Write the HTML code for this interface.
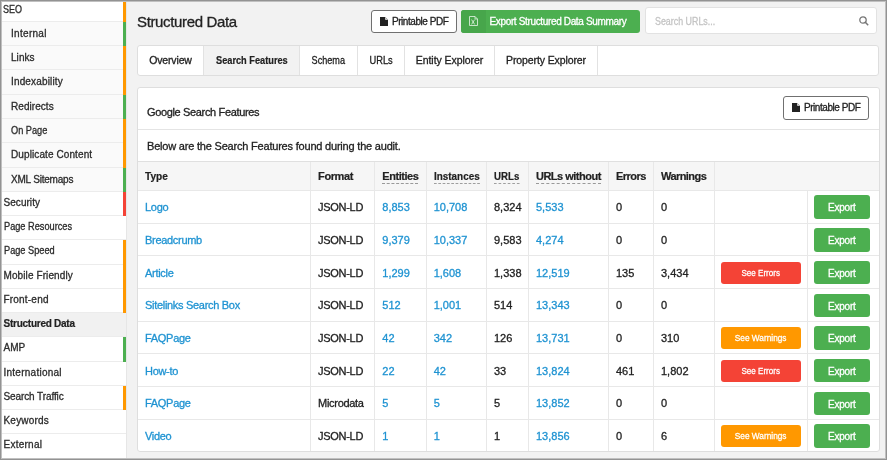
<!DOCTYPE html>
<html><head><meta charset="utf-8">
<style>
*{box-sizing:border-box;margin:0;padding:0}
html,body{width:887px;height:460px;overflow:hidden}
.side,.title,.btn-pdf,.btn-exp,.search,.tabs,.card{will-change:transform}
body{font-family:"Liberation Sans",sans-serif;background:#f2f2f2;position:relative;color:#222;-webkit-text-stroke:0.3px}
i{font-style:normal}
.sx{display:inline-block;transform-origin:50% 50%}
.frame{position:absolute;left:0;top:0;width:887px;height:460px;border:1px solid #939393;box-shadow:inset 0 0 0 1px #c0c0c0;pointer-events:none;z-index:50}
.side{position:absolute;left:0;top:0;width:127px;height:460px;background:#fff;overflow:hidden;border-right:1px solid #e6e6e6}
.si{position:absolute;left:0;width:126px;height:24.26px;border-bottom:1px solid #ececec;font-size:10px;line-height:22.5px;padding-left:3.5px;color:#2c2c2c;white-space:nowrap}
.si.sub{padding-left:11px;background:#fafafa;line-height:24.5px}
.si.act{background:#f1f1f1;font-weight:bold;color:#222;-webkit-text-stroke:0.2px}
.bar{position:absolute;left:123px;top:0;width:3px;height:24.26px}
.o{background:#ff9800}.g{background:#4caf50}.r{background:#f44336}
.title{position:absolute;left:137px;top:13px;font-size:15px;letter-spacing:-0.35px;color:#222;white-space:nowrap}
.btn-pdf{position:absolute;left:371px;top:10px;width:86px;height:23px;border:1px solid #707070;border-radius:3px;background:#fff;font-size:10px;letter-spacing:-0.45px;color:#222;line-height:21px;white-space:nowrap}
.btn-pdf .ic{position:absolute;left:8px;top:6px}
.btn-pdf span{position:absolute;left:20px;top:0}
.btn-exp{position:absolute;left:460.5px;top:10px;width:179px;height:23px;border-radius:3px;background:#4caf50;color:#fff;font-size:10px;letter-spacing:-0.35px;line-height:23px;white-space:nowrap;overflow:hidden}
.btn-exp .isec{position:absolute;left:0;top:0;width:24.5px;height:23px;background:#47a64b}
.btn-exp .ic{position:absolute;left:8px;top:6px}
.btn-exp span{position:absolute;left:28.5px;top:0}
.search{position:absolute;left:645px;top:7px;width:232px;height:27px;border:1px solid #e2e2e2;border-radius:3px;background:#fff}
.search span{position:absolute;left:9px;top:0.5px;line-height:24px;font-size:10.5px;color:#c4c4c4;letter-spacing:0;white-space:nowrap}
.search svg{position:absolute;left:213px;top:7.5px}
.tabs{position:absolute;left:137px;top:45px;width:742px;height:31px;border:1px solid #dedede;border-radius:3px;background:#fff;overflow:hidden}
.tab{position:absolute;top:0;height:29px;line-height:28px;font-size:10.5px;color:#222;border-right:1px solid #e2e2e2;text-align:center;white-space:nowrap}
.tab.act{background:#f2f2f2;font-weight:bold;-webkit-text-stroke:0.2px}
.card{position:absolute;left:137px;top:87px;width:743px;height:365px;border:1px solid #dedede;border-radius:3px;background:#fff;overflow:hidden}
.chead{position:absolute;left:0;top:0;width:100%;height:42px;border-bottom:1px solid #e4e4e4}
.chead .t{position:absolute;left:9px;top:18px;font-size:11px;letter-spacing:-0.35px;color:#222;white-space:nowrap}
.btn-pdf2{position:absolute;left:645px;top:8px;width:86px;height:24px;border:1px solid #707070;border-radius:3px;background:#fff;font-size:10px;letter-spacing:-0.45px;color:#222;line-height:22px;white-space:nowrap}
.btn-pdf2 .ic{position:absolute;left:8px;top:6px}
.btn-pdf2 span{position:absolute;left:20px;top:0}
.cdesc{position:absolute;left:0;top:42px;width:100%;height:32px;border-bottom:1px solid #e0e0e0}
.cdesc .t{position:absolute;left:9px;top:9.5px;font-size:11px;letter-spacing:-0.2px;color:#222;white-space:nowrap}
table{position:absolute;left:0;top:74px;border-collapse:collapse;table-layout:fixed;width:742px}
td,th{border-right:1px solid #e8e8e8;border-bottom:1px solid #e8e8e8;padding:0 0 0 7px;text-align:left;white-space:nowrap;font-size:11px;overflow:hidden}
th{height:28.4px;background:#f6f6f6;font-weight:bold;-webkit-text-stroke:0.2px;color:#222;letter-spacing:-0.5px}
td{height:32.7px;color:#222;padding-top:1px}
td:last-child,th:last-child{border-right:none}
th u{text-decoration:none;border-bottom:1px dashed #999;padding-bottom:1px}
td.l{color:#1f93d2}
td.ty{letter-spacing:-0.3px}
td.ac,td.ex{padding-left:6px}
.b{display:inline-block;height:22px;line-height:22px;border-radius:3px;color:#fff;font-size:9.5px;text-align:center;vertical-align:middle}
.be{background:#f44336;width:80px}
.bw{background:#ff9800;width:80px}
.bx{background:#4caf50;width:56px;height:23.5px;line-height:25px;font-size:10px;letter-spacing:-0.2px}
</style></head>
<body>
<div class="side">
<div class="si" style="top:-2.3px;line-height:24px;padding-left:3px"><i class="sx" style="transform:scaleX(0.9);transform-origin:0 50%">SEO</i><div class="bar o"></div></div>
<div class="si sub" style="top:21.96px"><span style="letter-spacing:0.3px">Internal</span><div class="bar g"></div></div>
<div class="si sub" style="top:46.22px"><span style="letter-spacing:0.05px">Links</span><div class="bar o"></div></div>
<div class="si sub" style="top:70.48px"><span style="letter-spacing:0.15px">Indexability</span><div class="bar o"></div></div>
<div class="si sub" style="top:94.74px"><span style="letter-spacing:0.05px">Redirects</span><div class="bar g"></div></div>
<div class="si sub" style="top:119.0px"><i class="sx" style="transform:scaleX(0.92);transform-origin:0 50%">On Page</i><div class="bar o"></div></div>
<div class="si sub" style="top:143.26px"><span style="letter-spacing:0.1px">Duplicate Content</span><div class="bar o"></div></div>
<div class="si sub" style="top:167.52px"><span style="letter-spacing:-0.2px">XML Sitemaps</span><div class="bar g"></div></div>
<div class="si" style="top:191.78px"><span style="letter-spacing:0.05px">Security</span><div class="bar r"></div></div>
<div class="si" style="top:216.04px"><i class="sx" style="transform:scaleX(0.92);transform-origin:0 50%">Page Resources</i></div>
<div class="si" style="top:240.3px"><i class="sx" style="transform:scaleX(0.92);transform-origin:0 50%">Page Speed</i><div class="bar o"></div></div>
<div class="si" style="top:264.56px"><span style="letter-spacing:0.1px">Mobile Friendly</span><div class="bar o"></div></div>
<div class="si" style="top:288.82px"><span style="letter-spacing:0.2px">Front-end</span><div class="bar o"></div></div>
<div class="si act" style="top:313.08px"><span style="letter-spacing:-0.25px">Structured Data</span></div>
<div class="si" style="top:337.34px"><span style="letter-spacing:0px">AMP</span><div class="bar g"></div></div>
<div class="si" style="top:361.6px"><span style="letter-spacing:0.25px">International</span></div>
<div class="si" style="top:385.86px"><span style="letter-spacing:-0.1px">Search Traffic</span><div class="bar o"></div></div>
<div class="si" style="top:410.12px"><span style="letter-spacing:0.2px">Keywords</span></div>
<div class="si" style="top:434.38px"><span style="letter-spacing:0.25px">External</span></div>
</div>
<div class="title">Structured Data</div>
<div class="btn-pdf"><svg class="ic" width="8" height="9" viewBox="0 0 8 9"><path d="M0 0H5.2L8 2.8V9H0Z" fill="#222"/><path d="M5.2 0V2.8H8Z" fill="#fff"/><path d="M5.9 1.2L6.8 2.1H5.9Z" fill="#444"/></svg><span>Printable PDF</span></div>
<div class="btn-exp"><div class="isec"></div><svg class="ic" width="9" height="10" viewBox="0 0 9 10"><path d="M0.5 0.5H6L8.5 3V9.5H0.5Z" fill="none" stroke="#e8f5e9" stroke-width="0.8"/><path d="M6 0.5V3H8.5" fill="none" stroke="#e8f5e9" stroke-width="0.7"/><path d="M2.6 3.6L5.6 8.4M5.6 3.6L2.6 8.4" stroke="#e8f5e9" stroke-width="0.8"/></svg><span>Export Structured Data Summary</span></div>
<div class="search"><span><i class="sx" style="transform:scaleX(0.845);transform-origin:0 50%">Search URLs...</i></span><svg width="10" height="10" viewBox="0 0 10 10"><circle cx="4" cy="4" r="3.2" fill="none" stroke="#777" stroke-width="1.3"/><path d="M6.3 6.3L9.2 9.2" stroke="#777" stroke-width="1.5"/></svg></div>
<div class="tabs">
 <div class="tab" style="left:0;width:66px;letter-spacing:-0.15px">Overview</div>
 <div class="tab act" style="left:66px;width:96px"><i class="sx" style="transform:scaleX(0.878)">Search Features</i></div>
 <div class="tab" style="left:162px;width:58px"><i class="sx" style="transform:scaleX(0.867)">Schema</i></div>
 <div class="tab" style="left:220px;width:47px"><i class="sx" style="transform:scaleX(0.885)">URLs</i></div>
 <div class="tab" style="left:267px;width:90px;letter-spacing:-0.05px">Entity Explorer</div>
 <div class="tab" style="left:357px;width:103px;letter-spacing:-0.1px">Property Explorer</div>
</div>
<div class="card">
 <div class="chead"><div class="t">Google Search Features</div><div class="btn-pdf2"><svg class="ic" width="8" height="9" viewBox="0 0 8 9"><path d="M0 0H5.2L8 2.8V9H0Z" fill="#222"/><path d="M5.2 0V2.8H8Z" fill="#fff"/><path d="M5.9 1.2L6.8 2.1H5.9Z" fill="#444"/></svg><span>Printable PDF</span></div></div>
 <div class="cdesc"><div class="t">Below are the Search Features found during the audit.</div></div>
 <table>
 <colgroup><col style="width:172.6px"><col style="width:64.2px"><col style="width:51.4px"><col style="width:60.3px"><col style="width:42px"><col style="width:80px"><col style="width:45px"><col style="width:60.8px"><col style="width:93px"><col style="width:72.7px"></colgroup>
 <tr><th><i class="sx" style="transform:scaleX(0.92);transform-origin:0 50%;letter-spacing:0">Type</i></th><th style="letter-spacing:-0.4px">Format</th><th><u style="letter-spacing:-0.45px">Entities</u></th><th><u class="sx" style="transform:scaleX(0.9);transform-origin:0 50%;letter-spacing:0;position:relative;top:1px">Instances</u></th><th><u class="sx" style="transform:scaleX(0.88);transform-origin:0 50%;letter-spacing:0;position:relative;top:1px">URLs</u></th><th><u style="letter-spacing:-0.5px">URLs without</u></th><th style="letter-spacing:-0.5px">Errors</th><th style="letter-spacing:-0.55px">Warnings</th><th colspan="2"></th></tr>
 <tr><td class="l ty">Logo</td><td class="ty">JSON-LD</td><td class="l">8,853</td><td class="l">10,708</td><td>8,324</td><td class="l">5,533</td><td>0</td><td>0</td><td class="ac"></td><td class="ex"><span class="b bx">Export</span></td></tr>
<tr><td class="l ty">Breadcrumb</td><td class="ty">JSON-LD</td><td class="l">9,379</td><td class="l">10,337</td><td>9,583</td><td class="l">4,274</td><td>0</td><td>0</td><td class="ac"></td><td class="ex"><span class="b bx">Export</span></td></tr>
<tr><td class="l ty">Article</td><td class="ty">JSON-LD</td><td class="l">1,299</td><td class="l">1,608</td><td>1,338</td><td class="l">12,519</td><td>135</td><td>3,434</td><td class="ac"><span class="b be"><i class="sx" style="transform:scaleX(0.85)">See Errors</i></span></td><td class="ex"><span class="b bx">Export</span></td></tr>
<tr><td class="l ty">Sitelinks Search Box</td><td class="ty">JSON-LD</td><td class="l">512</td><td class="l">1,001</td><td>514</td><td class="l">13,343</td><td>0</td><td>0</td><td class="ac"></td><td class="ex"><span class="b bx">Export</span></td></tr>
<tr><td class="l ty">FAQPage</td><td class="ty">JSON-LD</td><td class="l">42</td><td class="l">342</td><td>126</td><td class="l">13,731</td><td>0</td><td>310</td><td class="ac"><span class="b bw"><i class="sx" style="transform:scaleX(0.87)">See Warnings</i></span></td><td class="ex"><span class="b bx">Export</span></td></tr>
<tr><td class="l ty">How-to</td><td class="ty">JSON-LD</td><td class="l">22</td><td class="l">42</td><td>33</td><td class="l">13,824</td><td>461</td><td>1,802</td><td class="ac"><span class="b be"><i class="sx" style="transform:scaleX(0.85)">See Errors</i></span></td><td class="ex"><span class="b bx">Export</span></td></tr>
<tr><td class="l ty">FAQPage</td><td class="ty">Microdata</td><td class="l">5</td><td class="l">5</td><td>5</td><td class="l">13,852</td><td>0</td><td>0</td><td class="ac"></td><td class="ex"><span class="b bx">Export</span></td></tr>
<tr><td class="l ty">Video</td><td class="ty">JSON-LD</td><td class="l">1</td><td class="l">1</td><td>1</td><td class="l">13,856</td><td>0</td><td>6</td><td class="ac"><span class="b bw"><i class="sx" style="transform:scaleX(0.87)">See Warnings</i></span></td><td class="ex"><span class="b bx">Export</span></td></tr>

 </table>
</div>
<div class="frame"></div>
</body></html>
